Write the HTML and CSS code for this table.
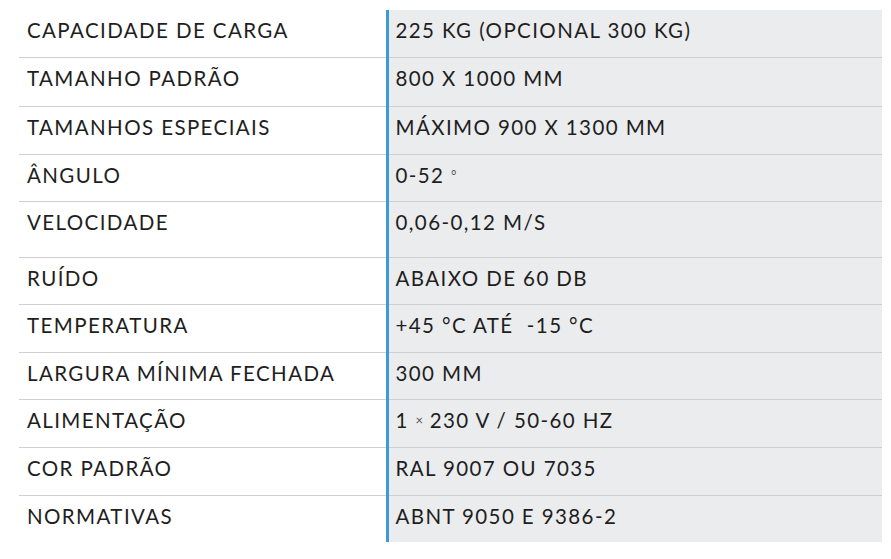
FILE: index.html
```html
<!DOCTYPE html>
<html lang="pt">
<head>
<meta charset="utf-8">
<title>Especificações</title>
<link rel="stylesheet" href="styles.css">
</head>
<body>
<table class="specs">
  <tbody>
    <tr class="h47 first"><td class="label">CAPACIDADE DE CARGA</td><td class="value">225 KG (OPCIONAL 300 KG)</td></tr>
    <tr class="h49"><td class="label">TAMANHO PADRÃO</td><td class="value">800 X 1000 MM</td></tr>
    <tr class="h48"><td class="label">TAMANHOS ESPECIAIS</td><td class="value">MÁXIMO 900 X 1300 MM</td></tr>
    <tr class="h47"><td class="label">ÂNGULO</td><td class="value">0-52 <span class="small">°</span></td></tr>
    <tr class="h56"><td class="label">VELOCIDADE</td><td class="value">0,06-0,12 M/S</td></tr>
    <tr class="h47"><td class="label">RUÍDO</td><td class="value">ABAIXO DE 60 DB</td></tr>
    <tr class="h48"><td class="label">TEMPERATURA</td><td class="value">+45 °C ATÉ &nbsp;-15 °C</td></tr>
    <tr class="h47"><td class="label">LARGURA MÍNIMA FECHADA</td><td class="value">300 MM</td></tr>
    <tr class="h48"><td class="label">ALIMENTAÇÃO</td><td class="value">1 <span class="small">×</span> 230 V / 50-60 HZ</td></tr>
    <tr class="h48"><td class="label">COR PADRÃO</td><td class="value">RAL 9007 OU 7035</td></tr>
    <tr class="h47 last"><td class="label">NORMATIVAS</td><td class="value">ABNT 9050 E 9386-2</td></tr>
  </tbody>
</table>
</body>
</html>
```

FILE: styles.css
```css
html, body {
  margin: 0;
  padding: 0;
  background: #ffffff;
}

body {
  padding: 10px 0 0 19px;
  font-family: "Lato", "DejaVu Sans", sans-serif;
  color: #1e1e1e;
}

.specs {
  border-collapse: collapse;
  width: 863px;
  table-layout: fixed;
}

.specs td {
  vertical-align: top;
  padding: 8px 8px 0 8px;
  font-size: 20.5px;
  font-weight: 400;
  line-height: 24px;
  letter-spacing: 1.4px;
  border-top: 1px solid #cfd0d2;
  box-sizing: border-box;
}

.specs tr.first td {
  border-top: none;
}

.specs .label {
  width: 368px;
  background: #ffffff;
}

.specs .value {
  background: #ebecee;
  border-left: 3px solid #3d9ad8;
  padding-left: 7px;
}

.h47 { height: 47px; }
.h48 { height: 48px; }
.h49 { height: 49px; }
.h56 { height: 56px; }

.small {
  font-size: 13px;
  letter-spacing: 0;
  vertical-align: 3px;
  color: #555555;
}
```
